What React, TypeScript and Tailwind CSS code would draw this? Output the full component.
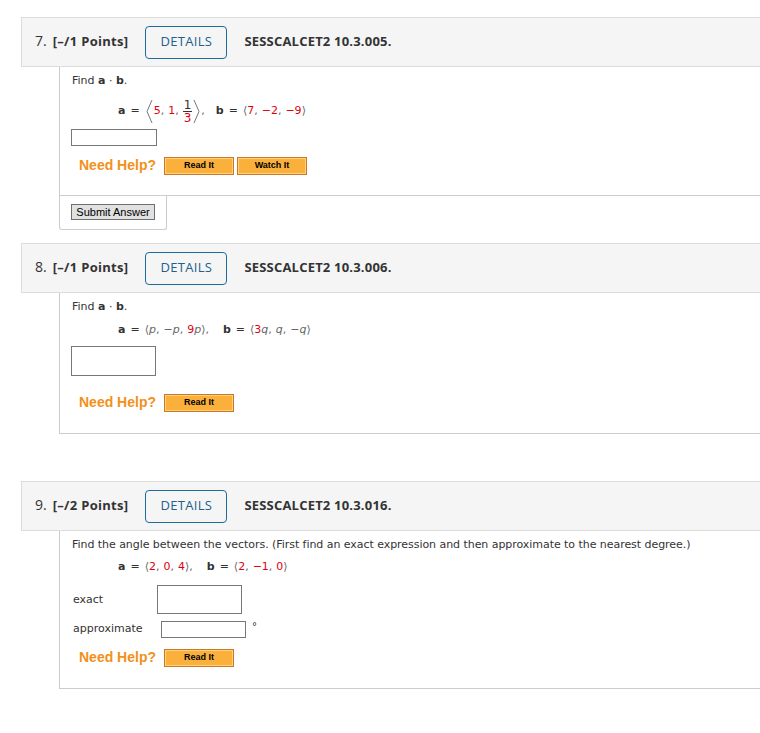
import React from 'react'

const body = "font-['DejaVu_Sans',Verdana,sans-serif] text-[11px] text-[#333]"

function Header({ num, pts, code }: { num: string; pts: string; code: string }) {
  return (
    <div className="ml-[21px] h-[50px] flex items-center border-y border-l border-[#dcdcdc] bg-[#f5f5f5] font-['Open_Sans',sans-serif] text-[#333]">
      <span className="ml-[13px] text-[14px] -mt-[3px]">{num}</span>
      <span className="ml-[6px] text-[13px] font-bold tracking-[0.3px]">{pts}</span>
      <div className="ml-[17px] w-[82px] h-[33px] flex items-center justify-center border border-[#1d6a9c] rounded-[4px] text-[13px] text-[#215f8d] tracking-[0.3px]">
        DETAILS
      </div>
      <span className="ml-[17px] text-[13px] font-bold tracking-[0.2px]">{code}</span>
    </div>
  )
}

function Ang({ c }: { c: string }) {
  return <span className="text-[#666]">{c}</span>
}

function R({ children }: { children: React.ReactNode }) {
  return <span className="text-[#e0000e]">{children}</span>
}

function I({ children }: { children: React.ReactNode }) {
  return <span className="italic text-[#666]">{children}</span>
}

function BigAngle({ right }: { right?: boolean }) {
  return (
    <svg width="7" height="25" viewBox="0 0 7 25" className="mx-[1px]">
      <polyline
        points={right ? '1,1 6,12.5 1,24' : '6,1 1,12.5 6,24'}
        fill="none"
        stroke="#777"
        strokeWidth="1"
      />
    </svg>
  )
}

function NeedHelp({ watch }: { watch?: boolean }) {
  const btn =
    "h-[18px] w-[70px] flex items-center justify-center border border-[#c7782a] bg-[#fbb03b] shadow-[inset_0_0_0_1px_#ffd27a] font-['Liberation_Sans',Arial,sans-serif] font-bold text-[9px] text-black"
  return (
    <div className="flex items-center">
      <span className="ml-[7px] font-['Liberation_Sans',Arial,sans-serif] font-bold text-[14px] text-[#f39019]">
        Need Help?
      </span>
      <div className={`ml-[8px] ${btn}`}>Read It</div>
      {watch && <div className={`ml-[3px] ${btn}`}>Watch It</div>}
    </div>
  )
}

export default function App() {
  return (
    <div className="w-[760px] min-h-[733px] bg-white overflow-hidden pt-[17px]">
      {/* Question 7 */}
      <Header num="7." pts="[–/1 Points]" code="SESSCALCET2 10.3.005." />
      <div className={`ml-[59px] ${body}`}>
        <div className="border-l border-b border-[#ccc] pl-[12px] pt-[6px] h-[129px]">
          <div className="leading-[16px]">
            Find <b>a</b> · <b>b</b>.
          </div>
          <div className="flex items-center ml-[46px] mt-[10px] h-[25px]">
            <b>a</b>
            <span className="mx-[5px]">=</span>
            <BigAngle />
            <R>5</R>
            <Ang c="," />
            <span className="ml-[4px]"><R>1</R></span>
            <Ang c="," />
            <span className="ml-[4px] inline-flex flex-col items-center leading-[12px] text-[12px] text-[#e0000e]">
              <span className="text-[#333] px-[1px]">1</span>
              <span className="border-t border-[#333] px-[1px]">3</span>
            </span>
            <BigAngle right />
            <Ang c="," />
            <b className="ml-[11px]">b</b>
            <span className="mx-[5px]">=</span>
            <Ang c="⟨" />
            <R>7</R>
            <Ang c="," />
            <span className="ml-[4px]"><R>−2</R></span>
            <Ang c="," />
            <span className="ml-[4px]"><R>−9</R></span>
            <Ang c="⟩" />
          </div>
          <div className="mt-[5px] w-[86px] h-[17px] border border-[#777] -ml-[1px]" />
          <div className="mt-[9px]">
            <NeedHelp watch />
          </div>
        </div>
        <div className="w-[108px] h-[35px] border-l border-r border-b border-[#ccc] rounded-b-[3px] pt-[9px] pl-[11px] -mt-[1px]">
          <div className="w-[84px] h-[16px] flex items-center justify-center border border-[#707070] bg-[#e1e1e1] font-['Liberation_Sans',Arial,sans-serif] text-[11px] text-black">
            Submit Answer
          </div>
        </div>
      </div>

      {/* Question 8 */}
      <div className="mt-[13px]">
        <Header num="8." pts="[–/1 Points]" code="SESSCALCET2 10.3.006." />
      </div>
      <div className={`ml-[59px] ${body}`}>
        <div className="border-l border-b border-[#ccc] pl-[12px] pt-[6px] h-[141px]">
          <div className="leading-[16px]">
            Find <b>a</b> · <b>b</b>.
          </div>
          <div className="flex items-center ml-[46px] mt-[7px] leading-[16px]">
            <b>a</b>
            <span className="mx-[5px]">=</span>
            <Ang c="⟨" />
            <I>p</I>
            <Ang c="," />
            <span className="ml-[4px]"><Ang c="−" /><I>p</I></span>
            <Ang c="," />
            <span className="ml-[4px]"><R>9</R><I>p</I></span>
            <Ang c="⟩" />
            <Ang c="," />
            <b className="ml-[14px]">b</b>
            <span className="mx-[5px]">=</span>
            <Ang c="⟨" />
            <R>3</R>
            <I>q</I>
            <Ang c="," />
            <span className="ml-[4px]"><I>q</I></span>
            <Ang c="," />
            <span className="ml-[4px]"><Ang c="−" /><I>q</I></span>
            <Ang c="⟩" />
          </div>
          <div className="mt-[8px] w-[85px] h-[30px] border border-[#777] -ml-[1px]" />
          <div className="mt-[16px]">
            <NeedHelp />
          </div>
        </div>
      </div>

      {/* Question 9 */}
      <div className="mt-[47px]">
        <Header num="9." pts="[–/2 Points]" code="SESSCALCET2 10.3.016." />
      </div>
      <div className={`ml-[59px] ${body}`}>
        <div className="border-l border-b border-[#ccc] pl-[12px] pt-[6px] h-[158px]">
          <div className="leading-[16px] tracking-[-0.05px]">
            Find the angle between the vectors. (First find an exact expression and then approximate to the nearest degree.)
          </div>
          <div className="flex items-center ml-[46px] mt-[6px] leading-[16px]">
            <b>a</b>
            <span className="mx-[5px]">=</span>
            <Ang c="⟨" />
            <R>2</R>
            <Ang c="," />
            <span className="ml-[4px]"><R>0</R></span>
            <Ang c="," />
            <span className="ml-[4px]"><R>4</R></span>
            <Ang c="⟩" />
            <Ang c="," />
            <b className="ml-[14px]">b</b>
            <span className="mx-[5px]">=</span>
            <Ang c="⟨" />
            <R>2</R>
            <Ang c="," />
            <span className="ml-[4px]"><R>−1</R></span>
            <Ang c="," />
            <span className="ml-[4px]"><R>0</R></span>
            <Ang c="⟩" />
          </div>
          <div className="mt-[10px] flex items-center">
            <span className="w-[85px] pl-[1px] pt-[2px]">exact</span>
            <div className="w-[85px] h-[29px] border border-[#777]" />
          </div>
          <div className="mt-[7px] flex items-center">
            <span className="w-[89px] pl-[1px]">approximate</span>
            <div className="w-[85px] h-[17px] border border-[#777]" />
            <span className="ml-[6px] -mt-[7px] text-[10px]">°</span>
          </div>
          <div className="mt-[9px]">
            <NeedHelp />
          </div>
        </div>
      </div>
    </div>
  )
}
